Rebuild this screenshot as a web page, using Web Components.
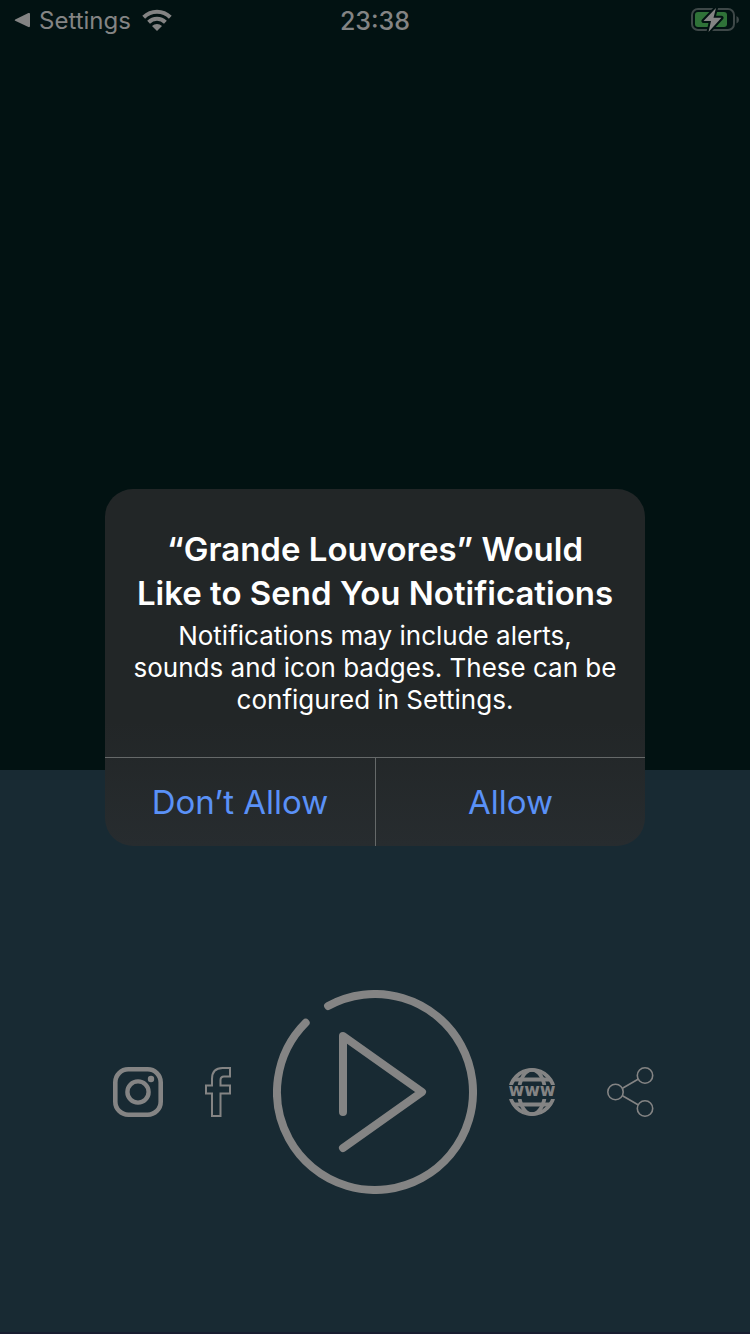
<!DOCTYPE html>
<html lang="en">
<head>
<meta charset="utf-8">
<meta name="viewport" content="width=device-width, initial-scale=1">
<title>Grande Louvores</title>
<style>
  html, body { margin: 0; min-height: 100%; background: #021212; }
  body { font-family: Inter, "Liberation Sans", sans-serif; }
</style>
</head>
<body>
<app-screen>
  <status-bar slot="status" time="23:38">Settings</status-bar>
  <player-dock slot="dock"></player-dock>
  <permission-alert slot="dialog">
    <span slot="title">“Grande Louvores” Would<br>Like to Send You Notifications</span>
    <span slot="message">Notifications may include alerts,<br>sounds and icon badges. These can be<br>configured in Settings.</span>
    <span slot="deny">Don’t Allow</span>
    <span slot="accept">Allow</span>
  </permission-alert>
</app-screen>

<script>
const define = (name, render) => customElements.define(name, class extends HTMLElement {
  constructor() {
    super();
    this.attachShadow({ mode: "open" }).innerHTML = render(this);
  }
});

define("app-screen", () => `
  <style>
    :host {
      display: grid; position: relative; min-height: 100vh;
      grid-template-rows: 770fr 564fr;
      --ink: #848484;
      --panel: #182a33;
    }
    main { display: contents; }
    .overlay {
      position: absolute; inset: 0; box-sizing: border-box; padding: 1px 16px 0;
      display: grid; place-items: center;
    }
  </style>
  <slot name="status"></slot>
  <main><slot name="dock"></slot></main>
  <div class="overlay"><slot name="dialog"></slot></div>`);

define("status-bar", el => `
  <style>
    :host { display: block; color: var(--ink); font-size: 24px; line-height: 40px; }
    header {
      display: grid; grid-template-columns: 1fr auto 1fr; align-items: center;
      height: 40px; padding: 0 11px;
    }
    .left { display: flex; align-items: center; gap: 11px; padding: 1px 0 0 3px; }
    a { display: flex; align-items: center; gap: 9px; color: inherit; text-decoration: none; }
    time { font-size: 25px; font-weight: 500; padding-top: 1px; }
    svg { display: block; }
    .battery { justify-self: end; }
  </style>
  <header>
    <div class="left">
      <a href="#settings">
        <svg width="16" height="18" viewBox="0 0 16 18" aria-hidden="true"><path fill="currentColor" d="M1.200 7.400 14.400 1.100Q16 .5 16 2V14Q16 15.600 14.400 15L1.200 8.800Q0 8.100 1.200 7.400Z"/></svg>
        <slot></slot>
      </a>
      <svg width="30" height="24" viewBox="0 0 30 24" role="img" aria-label="Wi-Fi">
        <g fill="none" stroke="currentColor" stroke-width="4">
          <path d="M1.700 8.300A19 19 0 0 1 28.300 8.300"/>
          <path d="M6.600 13.300A12 12 0 0 1 23.400 13.300"/>
        </g>
        <path fill="currentColor" d="M10 17A7.200 7.200 0 0 1 20 17L15 22Z"/>
      </svg>
    </div>
    <time>${el.getAttribute("time")}</time>
    <svg class="battery" width="48" height="28" viewBox="0 0 48 28" role="img" aria-label="Battery charging">
      <rect x="1" y="2" width="42" height="21" rx="6" fill="none" stroke="#3e4848" stroke-width="2"/>
      <path d="M45.500 9V16.500Q48 15.500 48 12.700Q48 10 45.500 9Z" fill="#3e4848"/>
      <rect x="4" y="5" width="32" height="15" rx="3" fill="#2f7238"/>
      <path d="M25 1 12.500 14H20L17.500 25 30.500 10.800H22.500Z" fill="#848484" stroke="#021212" stroke-width="4" paint-order="stroke" stroke-linejoin="round"/>
    </svg>
  </header>`);

define("player-dock", () => `
  <style>
    :host {
      display: grid; grid-row: 2; align-items: center; box-sizing: border-box;
      padding-top: 82px; background: var(--panel); border-bottom: 2px solid #181d30;
      color: var(--ink);
    }
    nav { display: grid; grid-template-columns: 1fr auto 1fr; align-items: center; gap: 30px; }
    .group { display: flex; align-items: center; gap: 30px; }
    .before { justify-content: flex-end; }
    .share { padding-left: 20px; }
  </style>
  <nav aria-label="Player and links">
    <div class="group before">
      <icon-button label="Instagram">
        <svg width="50" height="50" viewBox="0 0 50 50" fill="none" stroke="currentColor">
          <rect x="2.300" y="2.300" width="45.400" height="45.400" rx="13" stroke-width="4.600"/>
          <circle cx="25" cy="25" r="10.600" stroke-width="4.400"/>
          <circle cx="38" cy="12" r="3.200" fill="currentColor" stroke="none"/>
        </svg>
      </icon-button>
      <icon-button label="Facebook">
        <svg width="50" height="50" viewBox="0 0 50 50" fill="none" stroke="currentColor" stroke-width="2">
          <path d="M19 49V26.500H13V18.500H19V12C19 4.500 23 1 29.500 1H37V9.500H31C28.500 9.500 27.500 10.500 27.500 13V18.500H37V26.500H27.500V49Z"/>
        </svg>
      </icon-button>
    </div>
    <icon-button label="Play">
      <svg width="204" height="204" viewBox="0 0 204 204" fill="none" stroke="currentColor" stroke-width="8" stroke-linecap="round" stroke-linejoin="round">
        <circle cx="102" cy="102" r="98" pathLength="360" stroke-dasharray="343.500 16.500" transform="rotate(-118.600 102 102)"/>
        <path d="M70 122V46L149 102 70 158"/>
      </svg>
    </icon-button>
    <div class="group">
      <icon-button label="Website">
        <svg width="50" height="50" viewBox="0 0 50 50" fill="none" stroke="currentColor">
          <defs>
            <clipPath id="caps"><path d="M0 0H50V18H0ZM0 32H50V50H0Z"/></clipPath>
          </defs>
          <g clip-path="url(#caps)" stroke-width="3.800">
            <circle cx="25" cy="25" r="22.100"/>
            <ellipse cx="25" cy="25" rx="13" ry="22.100"/>
            <path d="M6 12.500H44M6 37.500H44"/>
          </g>
          <text x="25" y="29" text-anchor="middle" font-family="DejaVu Sans" font-weight="700" font-size="17" fill="currentColor" stroke="none">www</text>
        </svg>
      </icon-button>
      <icon-button class="share" label="Share">
        <svg width="50" height="50" viewBox="0 0 50 50" fill="none" stroke="currentColor" stroke-width="1.600">
          <circle cx="8.500" cy="25" r="7.700"/>
          <circle cx="38" cy="8.500" r="7.700"/>
          <circle cx="38" cy="41.500" r="7.700"/>
          <path d="M15.500 21.300 31 12.200M15.500 28.700 31 37.800"/>
        </svg>
      </icon-button>
    </div>
  </nav>`);

define("icon-button", el => `
  <style>
    :host { display: block; }
    button { display: block; padding: 0; border: 0; background: none; color: inherit; cursor: pointer; }
    ::slotted(svg) { display: block; }
  </style>
  <button type="button" aria-label="${el.getAttribute("label")}"><slot></slot></button>`);

define("permission-alert", () => `
  <style>
    :host {
      display: block; width: 100%; max-width: 540px; overflow: hidden; border-radius: 28px;
      background: linear-gradient(#222627 0%, #222627 65%, #272c2f 100%);
      color: #fff; text-align: center;
    }
    .copy { padding: 38px 16px 41px; }
    h1 { margin: 0 0 5px; font-size: 33px; line-height: 44px; font-weight: 600; }
    p { margin: 0; font-size: 26px; line-height: 32px; }
    .actions { display: grid; grid-template-columns: 1fr 1fr; border-top: 1px solid #656969; }
    button {
      height: 88px; padding: 0; border: 0; background: none; color: #5a91f7;
      font: inherit; font-size: 33px; cursor: pointer;
    }
    button + button { border-left: 1px solid #656969; }
  </style>
  <section role="alertdialog" aria-labelledby="title" aria-describedby="message">
    <div class="copy">
      <h1 id="title"><slot name="title"></slot></h1>
      <p id="message"><slot name="message"></slot></p>
    </div>
    <div class="actions">
      <button type="button"><slot name="deny"></slot></button>
      <button type="button"><slot name="accept"></slot></button>
    </div>
  </section>`);
</script>
</body>
</html>
